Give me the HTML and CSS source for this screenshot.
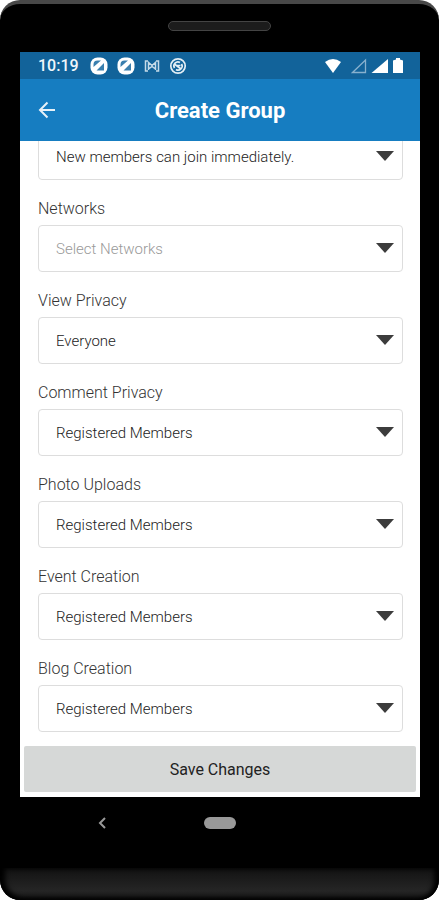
FILE: index.html
```html
<!DOCTYPE html>
<html lang="en">
<head>
<meta charset="utf-8">
<title>Create Group</title>
<meta name="viewport" content="width=device-width, initial-scale=1.0">
<link rel="stylesheet" href="styles.css">
</head>
<body>

<div class="phone">
	<div class="top"><div class="speaker"></div></div>

	<div class="screen">
		<div class="status">
			<span class="time">10:19</span>
			<svg width="18" height="18" viewBox="0 0 18 18">
				<rect x="0.5" y="0.5" width="17" height="17" rx="7" fill="#fff"/>
				<path d="M3.500 10V7.500a4 4 0 0 1 4-4H11zM6.500 13.500l7.500-7.500v7.500z" fill="#3a7fae"/>
				<path d="M5.500 9.500l4-4" stroke="#fff" stroke-width="1"/>
			</svg>
			<svg width="18" height="18" viewBox="0 0 18 18">
				<rect x="0.5" y="0.5" width="17" height="17" rx="7" fill="#fff"/>
				<path d="M3.500 10V7.500a4 4 0 0 1 4-4H11zM6.500 13.500l7.500-7.500v7.500z" fill="#3a7fae"/>
				<path d="M5.500 9.500l4-4" stroke="#fff" stroke-width="1"/>
			</svg>
			<svg width="16" height="16" viewBox="0 0 16 16" fill="none" stroke="#c5dbe9" stroke-width="1.500">
				<path d="M4 3H1.500v10H4M12 3h2.500v10H12M4.500 12V4.500L8 7.500l3.500-3V12M4.500 11L8 8.500l3.500 2.500"/>
			</svg>
			<svg width="18" height="18" viewBox="0 0 18 18" fill="none" stroke="#e3eef5" stroke-width="1.700">
				<circle cx="9" cy="9" r="7.200"/>
				<path d="M5.500 11a4 4 0 0 1 5.500-5.500M12.500 7a4 4 0 0 1-5.500 5.500M6 7.500l6 4.500M8 8.500h3.500"/>
			</svg>
			<span class="space"></span>
			<svg class="wifi" width="18" height="16" viewBox="0 0 18 16">
				<path d="M1 4Q9-2 17 4L9 15z" fill="#fff"/>
			</svg>
			<svg width="16" height="16" viewBox="0 0 16 16">
				<path d="M1.500 14.500L14.500 2v12.500z" fill="none" stroke="#88b1ce" stroke-width="1.300"/>
			</svg>
			<svg width="18" height="16" viewBox="0 0 18 16">
				<path d="M0.500 15L17 1v14z" fill="#fff"/>
			</svg>
			<svg width="10" height="16" viewBox="0 0 10 16">
				<path d="M0 2.500L3 1.500V0h4v1.500l3 1V15H0z" fill="#fff"/>
			</svg>
		</div>

		<header>
			<button type="button" class="back" aria-label="Back">
				<svg width="18" height="18" viewBox="0 0 18 18" fill="none" stroke="#e6f1f8" stroke-width="2">
					<path d="M17 9H2M9.500 1.500L2 9l7.500 7.500"/>
				</svg>
			</button>
			<h1>Create Group</h1>
		</header>

		<form>
			<div class="fields">
				<div class="field">
					<div class="box"><select aria-label="Approval"><option>New members can join immediately.</option></select></div>
				</div>
				<div class="field">
					<label for="networks">Networks</label>
					<div class="box"><select id="networks" class="empty"><option>Select Networks</option></select></div>
				</div>
				<div class="field">
					<label for="view">View Privacy</label>
					<div class="box"><select id="view"><option>Everyone</option></select></div>
				</div>
				<div class="field">
					<label for="comment">Comment Privacy</label>
					<div class="box"><select id="comment"><option>Registered Members</option></select></div>
				</div>
				<div class="field">
					<label for="photo">Photo Uploads</label>
					<div class="box"><select id="photo"><option>Registered Members</option></select></div>
				</div>
				<div class="field">
					<label for="event">Event Creation</label>
					<div class="box"><select id="event"><option>Registered Members</option></select></div>
				</div>
				<div class="field">
					<label for="blog">Blog Creation</label>
					<div class="box"><select id="blog"><option>Registered Members</option></select></div>
				</div>
			</div>
			<button type="submit" class="save">Save Changes</button>
		</form>
	</div>

	<nav>
		<button type="button" class="prev" aria-label="Back">
			<svg width="10" height="14" viewBox="0 0 10 14" fill="none" stroke="#999" stroke-width="2">
				<path d="M8 2L3 7l5 5"/>
			</svg>
		</button>
		<button type="button" class="home" aria-label="Home"></button>
		<span></span>
	</nav>
	<div class="chin"></div>
</div>

</body>
</html>
```
FILE: styles.css
```css
* {
	box-sizing: border-box;
}
body {
	margin: 0;
	background: white;
	font-family: Roboto, sans-serif;
	color: #333;
}
button {
	padding: 0;
	border: 0;
	background: none;
	font-family: inherit;
}
svg {
	display: block;
}

/* phone */
.phone {
	display: flex;
	flex-direction: column;
	height: 100vh;
	background: black;
	border-top: 4px solid #484848;
	border-radius: 20px;
	overflow: hidden;
}
.top {
	display: flex;
	justify-content: center;
	height: 48px;
	padding-top: 17px;
	flex: none;
}
.speaker {
	width: 103px;
	height: 10px;
	border: 1px solid #444;
	border-radius: 5px;
	background: #1c1c1c;
}
.screen {
	display: flex;
	flex-direction: column;
	flex: 1;
	min-height: 0;
	margin: 0 19px 0 20px;
	background: white;
}

/* status bar */
.status {
	display: flex;
	align-items: center;
	gap: 9px;
	height: 27px;
	padding: 0 17px 0 18px;
	background: #12639a;
	flex: none;
}
.time {
	width: 43px;
	font-size: 16px;
	font-weight: 500;
	color: #f0f6fa;
}
.space {
	flex: 1;
}
.status .space ~ svg {
	margin-left: -5px;
}
.status .wifi {
	margin-right: 5px;
}

/* title bar */
header {
	display: grid;
	grid-template-columns: 20px 1fr 20px;
	align-items: center;
	height: 62px;
	padding: 0 18px;
	background: #167dc1;
	flex: none;
}
h1 {
	margin: 0;
	font-size: 22px;
	font-weight: 700;
	text-align: center;
	color: white;
}

/* form */
form {
	display: flex;
	flex-direction: column;
	flex: 1;
	min-height: 0;
}
.fields {
	display: flex;
	flex-direction: column;
	justify-content: flex-end;
	gap: 19px;
	flex: 1;
	min-height: 0;
	padding: 0 17px 14px 18px;
	overflow: hidden;
}
.field {
	flex: none;
}
label {
	display: block;
	height: 26px;
	font-size: 16px;
	font-weight: 300;
	line-height: 20px;
}
.box {
	position: relative;
}
.box::after {
	content: "";
	position: absolute;
	top: 18px;
	right: 9px;
	border: 9px solid transparent;
	border-top: 10px solid #3c3c3c;
	border-bottom: 0;
	pointer-events: none;
}
select {
	display: block;
	width: 100%;
	height: 47px;
	padding: 0 32px 0 17px;
	border: 1px solid #ddd;
	border-radius: 4px;
	background: white;
	appearance: none;
	font-family: inherit;
	font-size: 15px;
	font-weight: 300;
	color: #222;
}
.empty {
	color: #999;
}
.save {
	height: 46px;
	margin: 0 4px 5px;
	border-radius: 2px;
	background: #d6d8d7;
	font-size: 16px;
	font-weight: 400;
	color: #222;
	flex: none;
}

/* android buttons */
nav {
	display: grid;
	grid-template-columns: 1fr 32px 1fr;
	align-items: center;
	justify-items: center;
	height: 71px;
	padding: 0 20px 19px;
	flex: none;
}
.prev {
	padding-right: 20px;
}
.home {
	width: 32px;
	height: 12px;
	border-radius: 6px;
	background: #999;
}
.chin {
	height: 32px;
	background: linear-gradient(#121212, #252525 70%, #181818);
	border-radius: 0 0 20px 20px;
	box-shadow: inset 5px -2px 5px black, inset -5px 0 5px black;
	flex: none;
}
```
